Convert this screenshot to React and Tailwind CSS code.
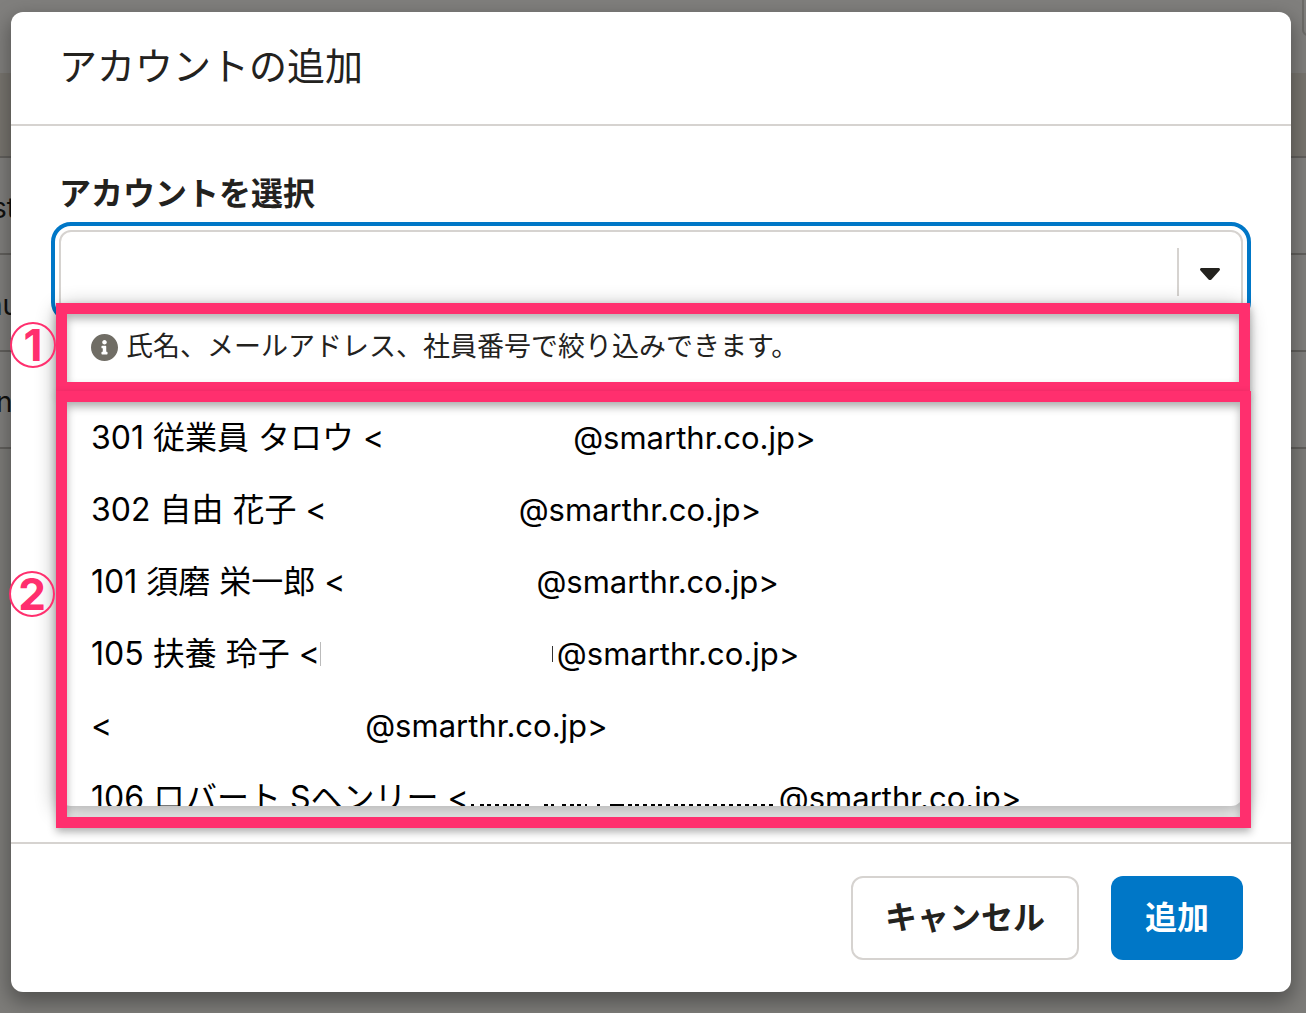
const accounts = [
  { name: "301 従業員 タロウ <", gap: "w-[189px]", domain: "@smarthr.co.jp>" },
  { name: "302 自由 花子 <", gap: "w-[192px]", domain: "@smarthr.co.jp>" },
  { name: "101 須磨 栄一郎 <", gap: "w-[191px]", domain: "@smarthr.co.jp>" },
  { name: "105 扶養 玲子 <", gap: "w-[237px]", domain: "@smarthr.co.jp>", cut: true },
  { name: "<", gap: "w-[253px]", domain: "@smarthr.co.jp>" },
  { name: "106 ロバート Sヘンリー <", gap: "w-[310px]", domain: "@smarthr.co.jp>", dots: true },
];

const backgroundRows = [
  { text: "st", offset: "-ml-2" },
  { text: "nu", offset: "-ml-[14px]" },
  { text: "n", offset: "-ml-1" },
];

function Backdrop() {
  return (
    <div aria-hidden="true" className="absolute inset-0 overflow-hidden bg-[#7d7c79] text-[28px] text-[#11110f]">
      <div className="flex h-[73px] justify-end overflow-hidden bg-[#807f7d]">
        <div className="-mr-2 -mt-3 h-12 w-3 rounded-xl border-2 border-[#6b6a67]" />
      </div>
      <div className="h-[85px] border-b-2 border-[#62605d] bg-[#78756f]" />
      {backgroundRows.map((row) => (
        <div key={row.text} className="flex h-[97px] items-center border-b-2 border-[#62605d] bg-[#807f7d] pt-1">
          <span className={row.offset}>{row.text}</span>
        </div>
      ))}
    </div>
  );
}

function Marker({ children, position }) {
  return (
    <span
      className={`absolute flex h-[46px] w-[46px] items-center justify-center rounded-full border-2 border-[#ff2f6e] text-[44px] font-bold leading-none text-[#ff2f6e] ${position}`}
    >
      {children}
    </span>
  );
}

export default function App() {
  return (
    <main
      lang="ja"
      className="relative min-h-screen overflow-hidden pb-[21px] pl-[11px] pr-[15px] pt-3 font-['Inter','Noto_Sans_CJK_JP',sans-serif] text-[#23221e]"
    >
      <Backdrop />
      <div
        role="dialog"
        aria-labelledby="dialog-title"
        className="relative rounded-xl bg-white shadow-[0_8px_20px_2px_rgba(0,0,0,0.35)]"
      >
        <header className="border-b-2 border-[#d6d3d0] px-12 pb-[30px] pt-[26px]">
          <h1 id="dialog-title" className="text-[38px] leading-[56px]">アカウントの追加</h1>
        </header>

        <div className="px-12 pb-[36px] pt-11">
          <label htmlFor="account" className="block pb-3 text-[32px] font-bold leading-[48px]">
            アカウントを選択
          </label>
          <div className="relative">
            <div className="flex h-[84px] items-center rounded-xl border-2 border-[#d6d3d0] outline-4 outline-offset-4 outline-[#0077c7]">
              <input
                id="account"
                role="combobox"
                aria-expanded="true"
                aria-controls="account-list"
                className="h-full min-w-0 flex-1 bg-transparent px-6 text-[32px] outline-none"
              />
              <button type="button" aria-label="候補を表示" className="flex h-12 w-16 items-center justify-center border-l-2 border-[#d6d3d0] pt-1">
                <svg viewBox="0 0 20 12" className="h-3 w-5 fill-[#23221e]" aria-hidden="true">
                  <path d="M1.500 0h17c1.300 0 2 1.600 1 2.500L11.700 11.300a2.500 2.500 0 0 1-3.400 0L.5 2.500C-.5 1.600.2 0 1.500 0z" />
                </svg>
              </button>
            </div>

            <div className="relative -mt-2 rounded-xl bg-white shadow-[0_4px_20px_4px_rgba(0,0,0,0.3)]">
              <div className="relative h-[86px] px-8 pt-[21px]">
                <p className="flex items-center gap-2 text-[27px] leading-[40px]">
                  <svg viewBox="8 8 496 496" className="h-[27px] w-[27px] shrink-0 fill-[#706d65]" aria-hidden="true">
                    <path d="M256 8C119 8 8 119 8 256s111 248 248 248 248-111 248-248S393 8 256 8zm0 110c23.200 0 42 18.800 42 42s-18.800 42-42 42-42-18.800-42-42 18.800-42 42-42zm56 254c0 6.600-5.400 12-12 12h-88c-6.600 0-12-5.400-12-12v-24c0-6.600 5.400-12 12-12h12v-64h-12c-6.600 0-12-5.400-12-12v-24c0-6.600 5.400-12 12-12h64c6.600 0 12 5.400 12 12v100h12c6.600 0 12 5.400 12 12v24z" />
                  </svg>
                  氏名、メールアドレス、社員番号で絞り込みできます。
                </p>
                <div className="pointer-events-none absolute -left-[3px] -right-[7px] -top-[3px] h-[90px] border-[11px] border-[#ff2f6e] shadow-[0_4px_8px_rgba(0,0,0,0.3),inset_0_5px_8px_rgba(0,0,0,0.3)]" />
                <Marker position="-left-[49px] top-4">1</Marker>
              </div>

              <div className="relative">
                <ul id="account-list" role="listbox" className="h-[414px] overflow-hidden rounded-b-xl pt-[10px] text-black">
                  {accounts.map((account) => (
                    <li key={account.name} role="option" aria-selected="false" className="flex h-[72px] items-center whitespace-pre px-8 text-[32px] leading-[48px]">
                      <span>{account.name}</span>
                      <span className={`relative h-12 shrink-0 ${account.gap}`}>
                        {account.cut && (
                          <>
                            <span className="absolute left-0 top-3 h-6 w-px bg-[#bbb]" />
                            <span className="absolute right-1 top-4 h-4 w-px bg-[#333]" />
                          </>
                        )}
                        {account.dots && (
                          <svg className="absolute left-0 top-[30px] h-[2px] w-full" aria-hidden="true">
                            <path
                              d="M2 1h3M11 1h4M18 1h4M26 1h4M34 1h4M41 1h4M48 1h4M56 1h4M75 1h4M82 1h3M93 1h4M101 1h4M108 1h4M116 1h2M128 1h3M141 1h14M159 1h4M166 1h4M174 1h4M182 1h4M189 1h4M197 1h4M205 1h4M212 1h4M220 1h4M228 1h4M236 1h4M244 1h4M252 1h4M260 1h4M268 1h4M276 1h4M284 1h4M292 1h4M300 1h4"
                              stroke="#000"
                              strokeWidth="2"
                            />
                          </svg>
                        )}
                      </span>
                      <span className="text-[31px]">{account.domain}</span>
                    </li>
                  ))}
                </ul>
                <div className="pointer-events-none absolute -bottom-[22px] -left-[3px] -right-2 -top-px border-[11px] border-[#ff2f6e] shadow-[0_4px_8px_rgba(0,0,0,0.3),inset_0_5px_8px_rgba(0,0,0,0.3)]" />
                <Marker position="-left-[50px] top-[179px]">2</Marker>
              </div>
            </div>
          </div>
        </div>

        <footer className="flex justify-end gap-8 border-t-2 border-[#d6d3d0] px-12 py-8 text-[32px] font-bold">
          <button type="button" className="h-[84px] rounded-xl border-2 border-[#d6d3d0] bg-white px-8">キャンセル</button>
          <button type="button" className="h-[84px] rounded-xl bg-[#0077c7] px-[34px] text-white">追加</button>
        </footer>
      </div>
    </main>
  );
}
